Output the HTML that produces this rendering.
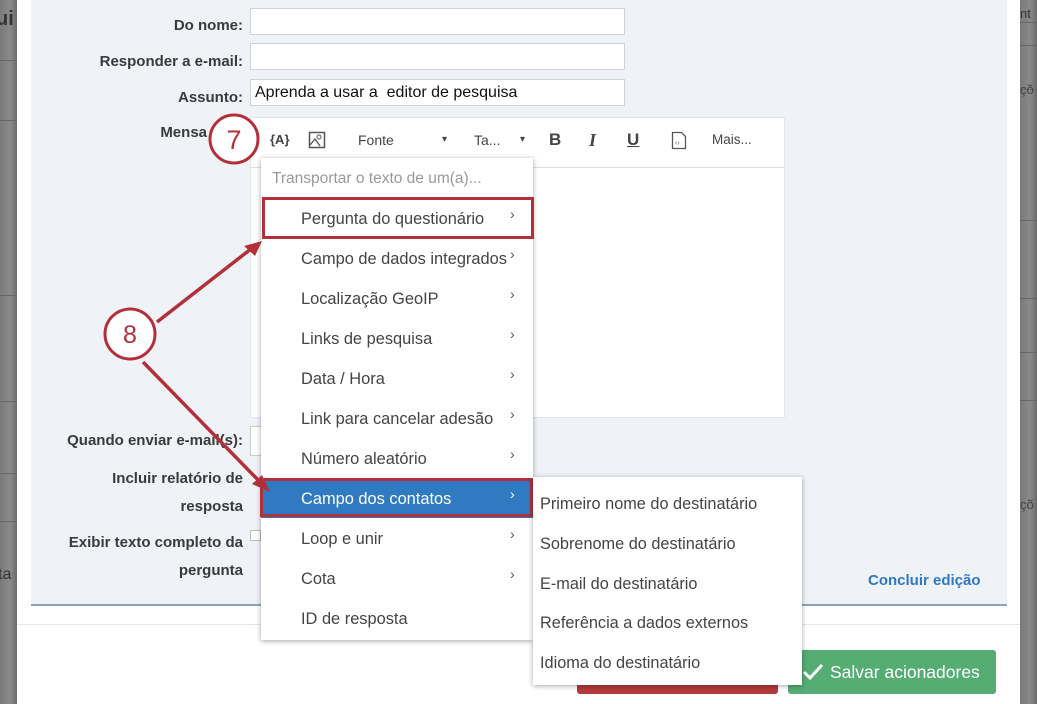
<!DOCTYPE html>
<html><head><meta charset="utf-8"><style>
*{margin:0;padding:0;box-sizing:border-box}
body{width:1037px;height:704px;overflow:hidden;position:relative;background:#fff;font-family:"Liberation Sans",Arial,sans-serif;color:#333}
.abs{position:absolute}
.strip{background:linear-gradient(90deg,#7a7a7a,#8a8a8a 60%,#6a6a6a);}
.hl{position:absolute;left:0;right:0;height:1px;background:#666}
.lbl{position:absolute;right:794px;font-size:15px;font-weight:bold;color:#3a3a3a;text-align:right;white-space:nowrap}
.inp{position:absolute;left:250px;width:375px;height:27px;background:#fff;border:1px solid #cfd3d8}
.mi{position:absolute;left:261px;width:272px;height:40px;font-size:16.4px;color:#444;padding-left:40px;line-height:42px;white-space:nowrap;overflow:hidden}
.mi .ch{position:absolute;left:249px;top:-5px;font-size:14px;color:#555}
.si{position:absolute;left:540px;font-size:16.3px;color:#444;white-space:nowrap}
.tb{position:absolute;top:132px;font-size:14px;color:#444}
</style></head><body>
<div class="abs strip" style="left:0;top:0;width:17px;height:704px">
<div class="hl" style="top:60px"></div><div class="hl" style="top:120px"></div><div class="hl" style="top:295px"></div><div class="hl" style="top:401px"></div><div class="hl" style="top:473px"></div><div class="hl" style="top:521px"></div>
<div class="abs" style="left:-4px;top:8px;font-size:20px;font-weight:bold;color:#333">ui</div>
<div class="abs" style="left:-2px;top:566px;font-size:16px;color:#333">ta</div>
</div>
<div class="abs strip" style="left:1020px;top:0;width:17px;height:704px;overflow:hidden">
<div class="hl" style="top:22px"></div><div class="hl" style="top:45px"></div><div class="hl" style="top:89px"></div><div class="hl" style="top:220px"></div><div class="hl" style="top:298px"></div><div class="hl" style="top:352px"></div><div class="hl" style="top:400px"></div>
<div class="abs" style="left:0;top:6px;font-size:13px;color:#333">nt</div>
<div class="abs" style="left:0;top:82px;font-size:13px;color:#444">çõ</div>
<div class="abs" style="left:0;top:497px;font-size:13px;color:#444">çõ</div>
</div>
<div class="abs" style="left:31px;top:0;width:976px;height:606px;background:#eff2f7;border-bottom:2px solid #8fa0bf"></div>
<div class="abs" style="left:17px;top:624px;width:1003px;height:1px;background:#e6e6e6"></div>

<div class="lbl" style="top:17px">Do nome:</div>
<div class="lbl" style="top:53px">Responder a e-mail:</div>
<div class="lbl" style="top:89px">Assunto:</div>
<div class="lbl" style="top:124px;right:830px">Mensa</div>
<div class="inp" style="top:8px"></div>
<div class="inp" style="top:43px"></div>
<div class="inp" style="top:79px;font-size:16px;color:#111;padding:4px 4px">Aprenda a usar a&nbsp; editor de pesquisa</div>

<div class="abs" style="left:250px;top:117px;width:535px;height:301px;background:#fff;border:1px solid #e3e6ea"></div>
<div class="abs" style="left:250px;top:167px;width:535px;height:1px;background:#ddd"></div>
<div class="tb" style="left:270px;font-weight:bold;font-size:13px">{A}</div>
<svg class="abs" style="left:308px;top:131px" width="18" height="18" viewBox="0 0 18 18"><rect x="1.5" y="1.5" width="15" height="15" fill="none" stroke="#555" stroke-width="1.5"/><circle cx="11" cy="6" r="2" fill="none" stroke="#555"/><path d="M2 14 L7 8 L12 15" fill="none" stroke="#555" stroke-width="1.3"/></svg>
<div class="tb" style="left:358px">Fonte</div>
<div class="tb" style="left:442px;font-size:10px;top:134px">▾</div>
<div class="tb" style="left:474px">Ta...</div>
<div class="tb" style="left:520px;font-size:10px;top:134px">▾</div>
<div class="tb" style="left:549px;font-weight:bold;font-size:17px;top:130px">B</div>
<div class="tb" style="left:589px;font-style:italic;font-family:'Liberation Serif',serif;font-weight:bold;font-size:18px;top:130px">I</div>
<div class="tb" style="left:627px;font-weight:bold;font-size:17px;top:130px;text-decoration:underline">U</div>
<svg class="abs" style="left:671px;top:131px" width="16" height="19" viewBox="0 0 16 19"><path d="M1.5 1.5h9l4 4v12h-13z" fill="none" stroke="#555" stroke-width="1.3"/><text x="4" y="14" font-size="7" fill="#555" font-family="Liberation Sans">‹›</text></svg>
<div class="tb" style="left:712px;font-size:13.5px">Mais...</div>

<div class="lbl" style="top:432px">Quando enviar e-mail(s):</div>
<div class="abs" style="left:250px;top:426px;width:12px;height:30px;background:#fff;border:1px solid #ccc"></div>
<div class="lbl" style="top:470px">Incluir relatório de</div>
<div class="lbl" style="top:498px">resposta</div>
<div class="lbl" style="top:534px">Exibir texto completo da</div>
<div class="lbl" style="top:562px">pergunta</div>
<div class="abs" style="left:250px;top:530px;width:11px;height:11px;background:#fff;border:1px solid #bbb"></div>
<div class="abs" style="left:868px;top:572px;font-size:15px;font-weight:bold;color:#2f78c4">Concluir edição</div>

<div class="abs" style="left:577px;top:676px;width:201px;height:18px;background:#b33a3a;border-radius:3px"></div>
<div class="abs" style="left:788px;top:650px;width:208px;height:44px;background:#55ad74;border-radius:3px;color:#fff;font-size:17.5px;line-height:44px;padding-left:42px">Salvar acionadores</div>
<svg class="abs" style="left:802px;top:662px" width="22" height="20" viewBox="0 0 22 20"><path d="M2 10 L8 16 L20 3" fill="none" stroke="#fff" stroke-width="3"/></svg>

<div class="abs" style="left:261px;top:158px;width:272px;height:482px;background:#fff;box-shadow:0 1px 5px rgba(0,0,0,.35)"></div>
<div class="mi" style="top:158px;padding-left:11px;color:#999;font-size:15.5px">Transportar o texto de um(a)...</div>
<div class="mi" style="top:198px">Pergunta do questionário<span class="ch">›</span></div>
<div class="mi" style="top:238px">Campo de dados integrados<span class="ch">›</span></div>
<div class="mi" style="top:278px">Localização GeoIP<span class="ch">›</span></div>
<div class="mi" style="top:318px">Links de pesquisa<span class="ch">›</span></div>
<div class="mi" style="top:358px">Data / Hora<span class="ch">›</span></div>
<div class="mi" style="top:398px">Link para cancelar adesão<span class="ch">›</span></div>
<div class="mi" style="top:438px">Número aleatório<span class="ch">›</span></div>
<div class="mi" style="top:478px;background:#2f7ac0;color:#fff">Campo dos contatos<span class="ch" style="color:#fff">›</span></div>
<div class="mi" style="top:518px">Loop e unir<span class="ch">›</span></div>
<div class="mi" style="top:558px">Cota<span class="ch">›</span></div>
<div class="mi" style="top:598px">ID de resposta</div>

<div class="abs" style="left:262px;top:197px;width:272px;height:42px;border:3px solid #b3303a"></div>
<div class="abs" style="left:260px;top:478px;width:273px;height:39px;border:3px solid #b3303a"></div>

<div class="abs" style="left:533px;top:477px;width:269px;height:208px;background:#fff;box-shadow:0 1px 5px rgba(0,0,0,.35)"></div>
<div class="si" style="top:495px">Primeiro nome do destinatário</div>
<div class="si" style="top:535px">Sobrenome do destinatário</div>
<div class="si" style="top:575px">E-mail do destinatário</div>
<div class="si" style="top:614px">Referência a dados externos</div>
<div class="si" style="top:654px">Idioma do destinatário</div>

<svg class="abs" style="left:0;top:0" width="1037" height="704">
<circle cx="234" cy="139" r="24" fill="#fff" stroke="#b3303a" stroke-width="3"/>
<text x="234" y="149" text-anchor="middle" font-size="27" fill="#b3303a" font-family="Liberation Sans">7</text>
<line x1="157" y1="322" x2="256" y2="245" stroke="#b3303a" stroke-width="3.5"/>
<path d="M262 241 L244 246 L255 256 z" fill="#b3303a"/>
<line x1="143" y1="362" x2="262" y2="484" stroke="#b3303a" stroke-width="3.5"/>
<path d="M270 492 L252 484 L262 475 z" fill="#b3303a"/>
<circle cx="130" cy="334" r="25" fill="#fff" stroke="#b3303a" stroke-width="3"/>
<text x="130" y="343" text-anchor="middle" font-size="25" fill="#b3303a" font-family="Liberation Sans">8</text>
</svg>
</body></html>
